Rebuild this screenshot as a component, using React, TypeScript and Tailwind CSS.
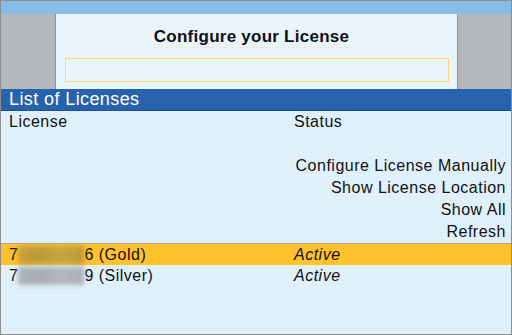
import React from "react"

const font = { fontFamily: '"Liberation Sans", Arial, sans-serif' }

function Blur({ gold }: { gold?: boolean }) {
  return (
    <span className="relative inline-block h-[18px] w-[66px] align-middle">
      <span
        className={
          gold
            ? "absolute inset-0 bg-[linear-gradient(90deg,#c9a23a,#bf9a3c,#caa640,#bd983a)] blur-[2px]"
            : "absolute inset-0 bg-[linear-gradient(90deg,#b0b5bc,#a7adb5,#b4b9c0,#a9afb7)] blur-[2px]"
        }
      />
    </span>
  )
}

function Row({
  left,
  right,
  highlight,
  className = "",
}: {
  left?: React.ReactNode
  right?: React.ReactNode
  highlight?: boolean
  className?: string
}) {
  return (
    <div
      className={
        "flex h-[22px] items-center text-[16px] tracking-[0.5px] text-[#111] " +
        (highlight ? "bg-[#fdc22c] " : "") +
        className
      }
    >
      <div className="w-[293px] pl-[8px] flex items-center">{left}</div>
      <div className="flex-1 pr-[5px]">{right}</div>
    </div>
  )
}

export default function App() {
  return (
    <div
      className="w-[512px] h-[335px] border border-[#8c8c8c] flex flex-col overflow-hidden bg-[repeating-linear-gradient(180deg,#e1f1fc_0px,#e1f1fc_3px,#dcEEfa_3px,#dceefa_4px)]"
      style={font}
    >
      <div className="h-[13px] bg-[#86bce5] shrink-0" />
      <div className="flex h-[75px] shrink-0">
        <div className="w-[55px] bg-[#b5b8bb] border-r border-[#8f959b]" />
        <div className="flex-1 bg-[#eaf4fd] flex flex-col items-center">
          <div className="mt-[13px] mr-[10px] text-[17px] tracking-[0.25px] font-bold text-[#111] leading-[20px] border-b border-dotted border-[#e6e2cc]">
            Configure your License
          </div>
          <div className="mt-[10px] w-[384px] h-[24px] border border-[#fbd77a] bg-[#eaf4fd]" />
        </div>
        <div className="w-[54px] bg-[#b5b8bb] border-l border-[#8f959b]" />
      </div>
      <div className="h-[22px] shrink-0 bg-[#2862ad] border-b border-[#1d4f90] flex items-center pl-[8px] text-[18px] tracking-[0.4px] text-white">
        List of Licenses
      </div>
      <Row left="License" right="Status" />
      <Row />
      <Row right={<div className="text-right">Configure License Manually</div>} />
      <Row right={<div className="text-right">Show License Location</div>} />
      <Row right={<div className="text-right">Show All</div>} />
      <Row right={<div className="text-right">Refresh</div>} />
      <Row
        highlight
        className="border-t border-[#a8a8a0]"
        left={
          <>
            <span>7</span>
            <Blur gold />
            <span>6 (Gold)</span>
          </>
        }
        right={<span className="italic">Active</span>}
      />
      <Row
        left={
          <>
            <span>7</span>
            <Blur />
            <span>9 (Silver)</span>
          </>
        }
        right={<span className="italic">Active</span>}
      />
    </div>
  )
}
